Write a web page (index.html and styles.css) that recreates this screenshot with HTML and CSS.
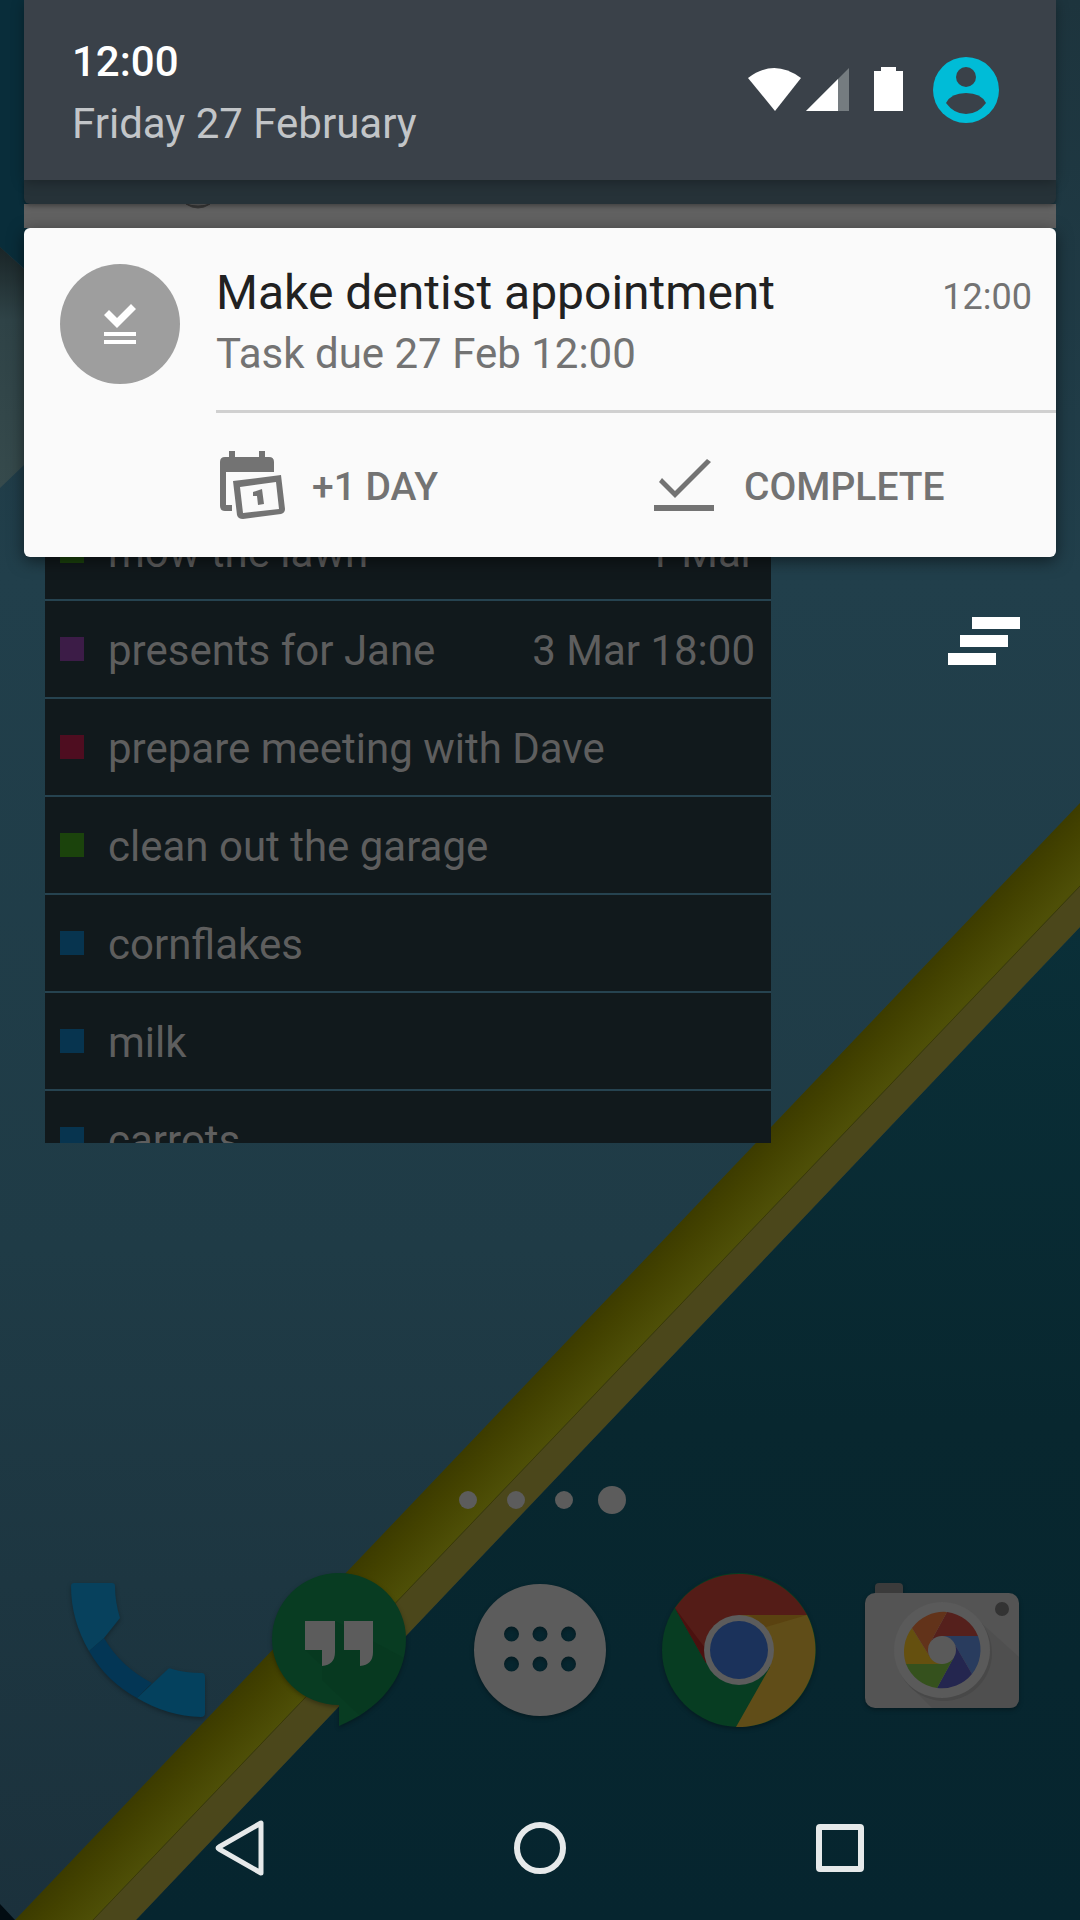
FILE: index.html
```html
<!DOCTYPE html>
<html lang="en">
<head>
<meta charset="utf-8">
<meta name="viewport" content="width=device-width, initial-scale=1">
<title>Notifications</title>
<link rel="stylesheet" href="styles.css">
</head>
<body>
<div class="screen">
  <svg class="wallpaper" viewBox="0 0 1080 1920" preserveAspectRatio="none" aria-hidden="true">
    <defs>
      <linearGradient id="slate" x1="0" y1="0" x2="0" y2="1"><stop offset="0" stop-color="#1d343d"/><stop offset=".3" stop-color="#213f4b"/><stop offset=".65" stop-color="#1f3b46"/><stop offset="1" stop-color="#1b313c"/></linearGradient>
      <linearGradient id="deep" x1="0" y1="0" x2="0" y2="1"><stop offset="0" stop-color="#0a2f38"/><stop offset=".5" stop-color="#08272f"/><stop offset="1" stop-color="#06252f"/></linearGradient>
      <linearGradient id="ribbon" gradientUnits="userSpaceOnUse" x1="540" y1="1369" x2="580" y2="1407"><stop offset="0" stop-color="#3c3b00"/><stop offset=".35" stop-color="#434200"/><stop offset="1" stop-color="#4e4f07"/></linearGradient>
      <linearGradient id="disc" x1="0" y1="0" x2="0" y2="1"><stop offset="0" stop-color="#1a2527"/><stop offset=".3" stop-color="#2f4347"/><stop offset="1" stop-color="#364a4c"/></linearGradient>
    </defs>
    <rect width="1080" height="1920" fill="url(#slate)"/>
    <path d="M0 0H60V300L0 247Z" fill="#092d3a"/>
    <path d="M0 247L24 269L60 310V437L24 465L0 488Z" fill="url(#disc)"/>
    <path d="M1080 927V1920H136Z" fill="url(#deep)"/>
    <path d="M1080 803V886L93 1920H15Z" fill="url(#ribbon)"/>
    <path d="M1080 886V927L136 1920H93Z" fill="#4b471b"/>
    <path d="M1080 886L93 1920" stroke="#3b3a08" stroke-width="1"/>
    <path d="M0 1904L15 1920H0Z" fill="#020c12"/>
  </svg>

  <main class="home">
    <ul class="tasks">
      <li class="task"><span class="swatch green"></span><span class="name">mow the lawn</span><span class="due">1 Mar</span></li>
      <li class="task"><span class="swatch purple"></span><span class="name">presents for Jane</span><span class="due">3 Mar 18:00</span></li>
      <li class="task"><span class="swatch red"></span><span class="name">prepare meeting with Dave</span></li>
      <li class="task"><span class="swatch green"></span><span class="name">clean out the garage</span></li>
      <li class="task"><span class="swatch blue"></span><span class="name">cornflakes</span></li>
      <li class="task"><span class="swatch blue"></span><span class="name">milk</span></li>
      <li class="task"><span class="swatch blue"></span><span class="name">carrots</span></li>
    </ul>
    <div class="pages"><span class="page"></span><span class="page"></span><span class="page"></span><span class="page current"></span></div>
    <nav class="dock" aria-label="Favourite apps">
      <a href="#phone" class="app" aria-label="Phone"><svg viewBox="0 0 180 180">
        <path d="M41 91L56 78Q73 107 104 123L89 138Q58 121 41 91Z" fill="#033655"/>
        <path d="M23 26Q23 23 26 23H64Q67 23 67 26Q67 42 72 58L56 78L41 91Q23 60 23 26Z" fill="#07415d"/>
        <path d="M89 138L119 110Q121 107 124 109Q137 113 154 113Q157 113 157 117V153Q157 157 153 157Q119 156 89 138Z" fill="#04415e"/>
      </svg></a>
      <a href="#hangouts" class="app" aria-label="Hangouts"><svg viewBox="0 0 180 180">
        <path d="M90 13A67 66 0 0 1 157 79C157 119 129 150 90 166V145A67 66 0 0 1 23 79A67 66 0 0 1 90 13Z" fill="#083c22"/>
        <path d="M86 61L155 98Q146 134 110 155L73 120V106L56 90Z" fill="#07351e" opacity=".4"/>
        <path d="M56 61H86V92Q86 105 73 106V90H56ZM95 61H124V92Q124 105 111 106V90H95Z" fill="#5c5c5c"/>
      </svg></a>
      <a href="#apps" class="app" aria-label="All apps"><svg viewBox="0 0 180 180">
        <path fill="#5c5c5c" fill-rule="evenodd" d="M90 24a66 66 0 1 0 0 132a66 66 0 1 0 0-132ZM61.500 66.500a7.500 7.500 0 1 1 0 15a7.500 7.500 0 1 1 0-15ZM90 66.500a7.500 7.500 0 1 1 0 15a7.500 7.500 0 1 1 0-15ZM118.500 66.500a7.500 7.500 0 1 1 0 15a7.500 7.500 0 1 1 0-15ZM61.500 96.500a7.500 7.500 0 1 1 0 15a7.500 7.500 0 1 1 0-15ZM90 96.500a7.500 7.500 0 1 1 0 15a7.500 7.500 0 1 1 0-15ZM118.500 96.500a7.500 7.500 0 1 1 0 15a7.500 7.500 0 1 1 0-15Z"/>
      </svg></a>
      <a href="#chrome" class="app" aria-label="Chrome"><svg viewBox="0 0 180 180">
        <circle cx="88" cy="90" r="77" fill="#073d22"/>
        <path d="M156 55A77 77 0 0 1 85 167L119 107L88 90V55Z" fill="#604d18"/>
        <path d="M24 48A77 77 0 0 1 156 55H88L88 90L55 103Z" fill="#541c17"/>
        <path d="M24 48L55 103L54 88Z" fill="#4b110f"/>
        <path d="M98 55H156L115 67Z" fill="#5a4210"/>
        <circle cx="88" cy="90" r="35" fill="#5c5c5c"/><circle cx="88" cy="90" r="29" fill="#1b325b"/>
      </svg></a>
      <a href="#camera" class="app" aria-label="Camera"><svg viewBox="0 0 180 180">
        <path d="M23 36V27Q23 23 27 23H47Q51 23 51 27V36Z" fill="#3b3b3b"/>
        <rect x="13" y="33" width="154" height="115" rx="10" fill="#545454"/>
        <path d="M126 60L167 97V138Q167 148 157 148H80L58 126Z" fill="#4f4f4f"/>
        <circle cx="150" cy="49" r="7" fill="#333"/>
        <circle cx="92" cy="93" r="48" fill="#484848"/>
        <circle cx="90" cy="90" r="48" fill="#5a5a5a"/>
        <path d="M95 52A39 39 0 0 1 126 76H90L78 83Z" fill="#55201c"/>
        <path d="M126 76A39 39 0 0 1 120 114L102 83L90 76Z" fill="#293c5e"/>
        <path d="M120 114A39 39 0 0 1 85 128L102 97V83Z" fill="#24264f"/>
        <path d="M85 128A39 39 0 0 1 54 104H90L102 97Z" fill="#35511d"/>
        <path d="M54 104A39 39 0 0 1 60 68L78 97L90 104Z" fill="#65500f"/>
        <path d="M60 68A39 39 0 0 1 95 52L78 83V97Z" fill="#62331a"/>
        <circle cx="90" cy="90" r="14" fill="#5a5a5a"/>
      </svg></a>
    </nav>
  </main>

  <nav class="navbar" aria-label="System">
    <button type="button" class="key" aria-label="Back"><svg viewBox="0 0 72 72"><path d="M57 11V61L15 37Q13 36 15 35Z" fill="none" stroke="#e6e9ea" stroke-width="5" stroke-linejoin="round"/></svg></button>
    <button type="button" class="key" aria-label="Home"><svg viewBox="0 0 72 72"><circle cx="36" cy="36" r="23" fill="none" stroke="#e6e9ea" stroke-width="6"/></svg></button>
    <button type="button" class="key" aria-label="Overview"><svg viewBox="0 0 72 72"><rect x="15" y="15" width="42" height="42" rx="1" fill="none" stroke="#e6e9ea" stroke-width="6" stroke-linejoin="round"/></svg></button>
  </nav>

  <section class="shade" aria-label="Notification shade">
    <header class="status">
      <div class="clock"><div class="time">12:00</div><div class="date">Friday 27 February</div></div>
      <svg class="signals" viewBox="748 54 156 72" role="img" aria-label="Wi-Fi, mobile signal and battery">
        <path d="M748 78Q774 58 801 78L775 111Z" fill="#fff"/>
        <path d="M849 68V111H806Z" fill="#757c80"/><path d="M838 79V111H806Z" fill="#fff"/>
        <path d="M881 67H896V71H903V111H874V71H881Z" fill="#fff"/>
      </svg>
      <button type="button" class="avatar" aria-label="User"><svg viewBox="0 0 66 66"><circle cx="33" cy="33" r="33" fill="#00bcd7"/><circle cx="33" cy="20" r="10" fill="#3a4149"/><path d="M13 46Q18 36 33 36Q48 36 53 46Q45 57 33 57Q21 57 13 46Z" fill="#3a4149"/></svg></button>
    </header>
    <div class="peek"></div>
    <div class="older"><svg viewBox="0 0 24 24" aria-hidden="true"><path d="M0 0Q12 8 24 0Q12 4 0 0Z" fill="#383838" stroke="#383838"/></svg></div>
    <article class="card">
      <div class="badge"><svg viewBox="60 264 120 120" aria-hidden="true"><path d="M104 315L109 310L117 318L131 304L136 309L117 328ZM104 332H136V336H104ZM104 340H136V344H104Z" fill="#fff"/></svg></div>
      <div class="content">
        <div class="summary">
          <div class="headline"><h1 class="title">Make dentist appointment</h1><span class="when">12:00</span></div>
          <p class="detail">Task due 27 Feb 12:00</p>
        </div>
        <div class="actions">
          <button type="button" class="action"><svg viewBox="216 450 72 72" aria-hidden="true">
            <path d="M229 452H235V458H259V452H265V458H269Q274 458 274 463V473H226V506H232V512H225Q220 512 220 507V463Q220 458 225 458H229Z"/>
            <path fill-rule="evenodd" d="M233 482L281 476L285 510Q285 514 281 515L243 520Q238 520 237 516ZM240 488L276 483L279 510L243 514Z"/>
            <path d="M253 493L262 490L264 505L258 506L257 497L253 497Z"/>
          </svg><span class="label">+1 DAY</span></button>
          <button type="button" class="action"><svg viewBox="648 450 72 72" aria-hidden="true"><path d="M659 483L662 479L675 492L707 460L711 463L675 499ZM654 506H714V512H654Z"/></svg><span class="label">COMPLETE</span></button>
        </div>
      </div>
    </article>
    <button type="button" class="clear" aria-label="Clear all"><svg viewBox="0 0 72 48"><path d="M24 0H72V12H24ZM12 18H60V30H12ZM0 36H48V48H0Z" fill="#fff"/></svg></button>
  </section>
</div>
</body>
</html>
```

FILE: styles.css
```css
* {
  box-sizing: border-box;
}

body {
  margin: 0;
  font-family: Roboto, "Noto Sans", sans-serif;
  background: #1e3944;
}

button {
  display: flex;
  align-items: center;
  padding: 0;
  border: 0;
  background: none;
  font: inherit;
  color: inherit;
  cursor: pointer;
}

svg {
  display: block;
}

.screen {
  position: relative;
  display: flex;
  flex-direction: column;
  min-height: 100vh;
  overflow: hidden;
}

.wallpaper {
  position: absolute;
  inset: 0;
  width: 100%;
  height: 100%;
}

/* Home screen */

.home {
  position: relative;
  flex: 1;
  display: flex;
  flex-direction: column;
  padding-top: 503px;
}

.tasks {
  max-height: 640px;
  margin: 0 309px auto 45px;
  padding: 0;
  overflow: hidden;
  list-style: none;
  font-size: 42px;
  line-height: 48px;
  color: #5e5e5e;
  background: #264350;
}

.task {
  display: flex;
  align-items: center;
  height: 96px;
  padding: 0 16px 0 15px;
  background: #11191c;
}

.task + .task {
  margin-top: 2px;
}

.swatch {
  width: 24px;
  height: 24px;
  margin-right: 24px;
}

.green { background: #1b430c; }
.purple { background: #3c1c47; }
.red { background: #4e0d20; }
.blue { background: #07344f; }

.name,
.due {
  padding-top: 4px;
}

.due {
  margin-left: auto;
}

.pages {
  display: flex;
  justify-content: center;
  align-items: center;
  gap: 30px;
  height: 28px;
  margin-bottom: 46px;
  padding-left: 4px;
}

.page {
  width: 18px;
  height: 18px;
  border-radius: 50%;
  background: #5c5c5c;
}

.current {
  width: 28px;
  height: 28px;
  margin-left: -5px;
}

.dock {
  display: grid;
  grid-template-columns: repeat(5, 1fr);
  justify-items: center;
  padding: 0 38px;
  margin-bottom: 36px;
}

.app svg {
  width: 180px;
  height: 180px;
  filter: drop-shadow(0 2px 2px rgba(0, 0, 0, 0.3));
}

.navbar {
  position: relative;
  display: flex;
  justify-content: center;
  gap: 228px;
  height: 144px;
}

.key svg {
  width: 72px;
  height: 72px;
}

/* Notification shade, laid over the home screen */

.shade {
  position: absolute;
  top: 0;
  left: 24px;
  right: 24px;
}

.status {
  position: relative;
  z-index: 2;
  display: flex;
  align-items: center;
  height: 180px;
  padding: 0 57px 0 48px;
  background: #3a4149;
  box-shadow: 0 2px 12px rgba(0, 0, 0, 0.3);
}

.clock {
  margin-right: auto;
  padding-top: 4px;
  font-size: 42px;
  color: #fff;
}

.time {
  line-height: 64px;
  font-weight: 500;
}

.date {
  line-height: 60px;
  color: #c2c5c8;
}

.signals {
  width: 156px;
  height: 72px;
  margin-right: 29px;
}

.avatar svg {
  width: 66px;
  height: 66px;
}

.peek {
  position: relative;
  z-index: 1;
  height: 24px;
  border-radius: 0 0 6px 6px;
  background: #263238;
  box-shadow: 0 2px 5px rgba(0, 0, 0, 0.35);
}

.older {
  height: 24px;
  padding-left: 162px;
  background: #616161;
}

.older svg {
  width: 24px;
  height: 24px;
}

.card {
  position: relative;
  display: flex;
  border-radius: 6px;
  background: #fafafa;
  box-shadow: 0 4px 16px rgba(0, 0, 0, 0.5);
}

.badge {
  width: 120px;
  height: 120px;
  margin: 36px;
  border-radius: 50%;
  background: #9e9e9e;
}

.content {
  flex: 1;
}

.summary {
  height: 182px;
  padding: 37px 24px 0 0;
}

.headline {
  display: flex;
  justify-content: space-between;
  align-items: baseline;
}

.title {
  margin: 0;
  font-size: 48px;
  font-weight: 400;
  line-height: 56px;
  color: #212121;
}

.when {
  font-size: 36px;
  color: #737373;
}

.detail {
  margin: 5px 0 0;
  font-size: 42px;
  line-height: 56px;
  color: #737373;
}

.actions {
  display: grid;
  grid-template-columns: 1fr 1fr;
  gap: 24px;
  height: 147px;
  border-top: 3px solid #d0d0d0;
}

.action {
  gap: 24px;
  font-size: 39px;
  font-weight: 500;
  color: #737373;
}

.label {
  padding-top: 4px;
}

.action svg {
  width: 72px;
  height: 72px;
  fill: #737373;
}

.clear {
  margin: 60px 36px 0 auto;
}

.clear svg {
  width: 72px;
  height: 48px;
}
```
